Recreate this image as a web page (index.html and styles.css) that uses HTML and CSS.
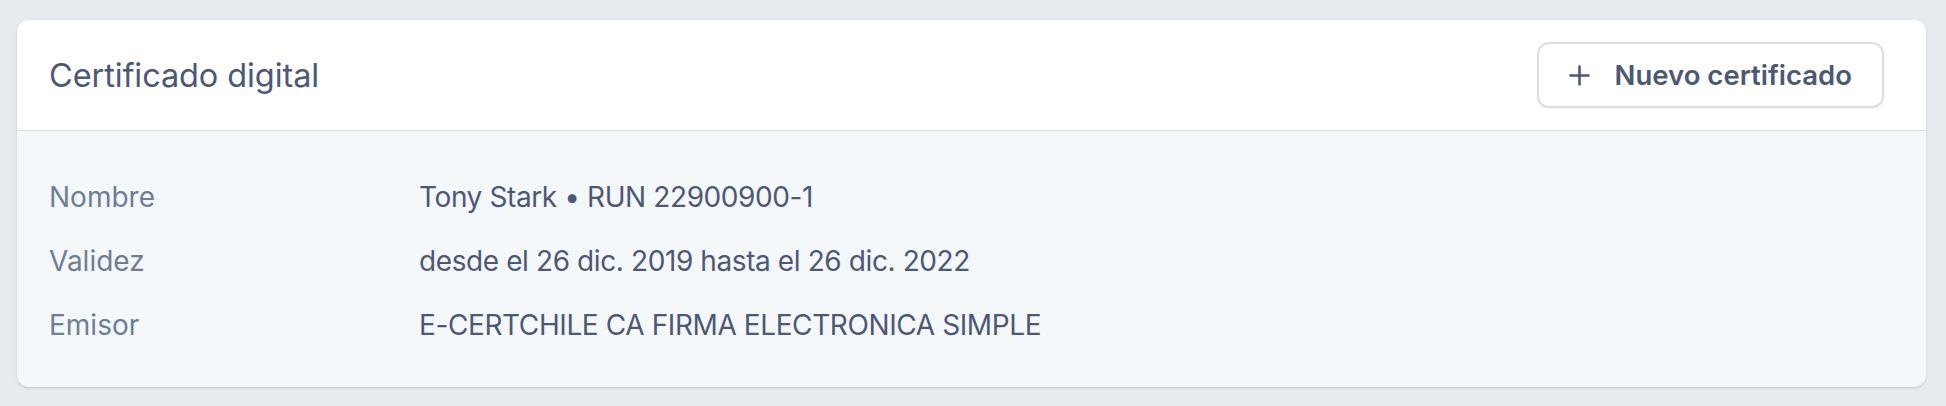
FILE: index.html
```html
<!DOCTYPE html>
<html lang="es">
<head>
<meta charset="utf-8">
<title>Certificado digital</title>
<link rel="stylesheet" href="styles.css">
</head>
<body>
<div class="page">
  <section class="card">
    <header class="card-header">
      <h2 class="card-title">Certificado digital</h2>
      <button class="btn" type="button">
        <svg class="btn-icon" viewBox="0 0 21 21" width="21" height="21" aria-hidden="true">
          <path d="M10.5 1.5v18M1.5 10.5h18" stroke="currentColor" stroke-width="2.6" stroke-linecap="round" fill="none"/>
        </svg>
        <span>Nuevo certificado</span>
      </button>
    </header>
    <dl class="details">
      <div class="row">
        <dt>Nombre</dt>
        <dd>Tony Stark • RUN 22900900-1</dd>
      </div>
      <div class="row">
        <dt>Validez</dt>
        <dd>desde el 26 dic. 2019 hasta el 26 dic. 2022</dd>
      </div>
      <div class="row">
        <dt>Emisor</dt>
        <dd>E-CERTCHILE CA FIRMA ELECTRONICA SIMPLE</dd>
      </div>
    </dl>
  </section>
</div>
</body>
</html>
```
FILE: styles.css
```css
* { box-sizing: border-box; }
html, body {
  margin: 0;
  padding: 0;
  background: #e7eaee;
  font-family: Inter, "Noto Sans", "Liberation Sans", sans-serif;
}
.page {
  padding: 20px 20px 18px 17px;
}
.card {
  background: #f5f8fb;
  border-radius: 12px;
  box-shadow: 0 1px 3px rgba(30, 41, 59, 0.12), 0 1px 2px rgba(30, 41, 59, 0.06);
  overflow: hidden;
}
.card-header {
  background: #ffffff;
  display: flex;
  align-items: center;
  justify-content: space-between;
  height: 111px;
  padding: 0 42px 0 32px;
  border-bottom: 1px solid #dbe1ea;
}
.card-title {
  margin: 0;
  font-size: 32.5px;
  font-weight: 400;
  color: #4b5877;
  letter-spacing: -0.1px;
}
.btn {
  display: flex;
  align-items: center;
  gap: 25px;
  height: 66px;
  padding: 0 30px 0 30px;
  background: #ffffff;
  border: 2px solid #d9dfea;
  border-radius: 12px;
  font-family: inherit;
  font-size: 27.5px;
  font-weight: 600;
  color: #4b5877;
  box-shadow: 0 1px 2px rgba(30, 41, 59, 0.05);
}
.btn-icon {
  display: block;
  flex: none;
}
.details {
  margin: 0;
  padding: 46px 32px 42px 32px;
  display: flex;
  flex-direction: column;
  gap: 24px;
}
.row {
  display: grid;
  grid-template-columns: 370px 1fr;
  line-height: 40px;
  font-size: 28px;
}
.row dt {
  color: #6b7f97;
}
.row dd {
  margin: 0;
  color: #4b5877;
  letter-spacing: -0.4px;
}
```
